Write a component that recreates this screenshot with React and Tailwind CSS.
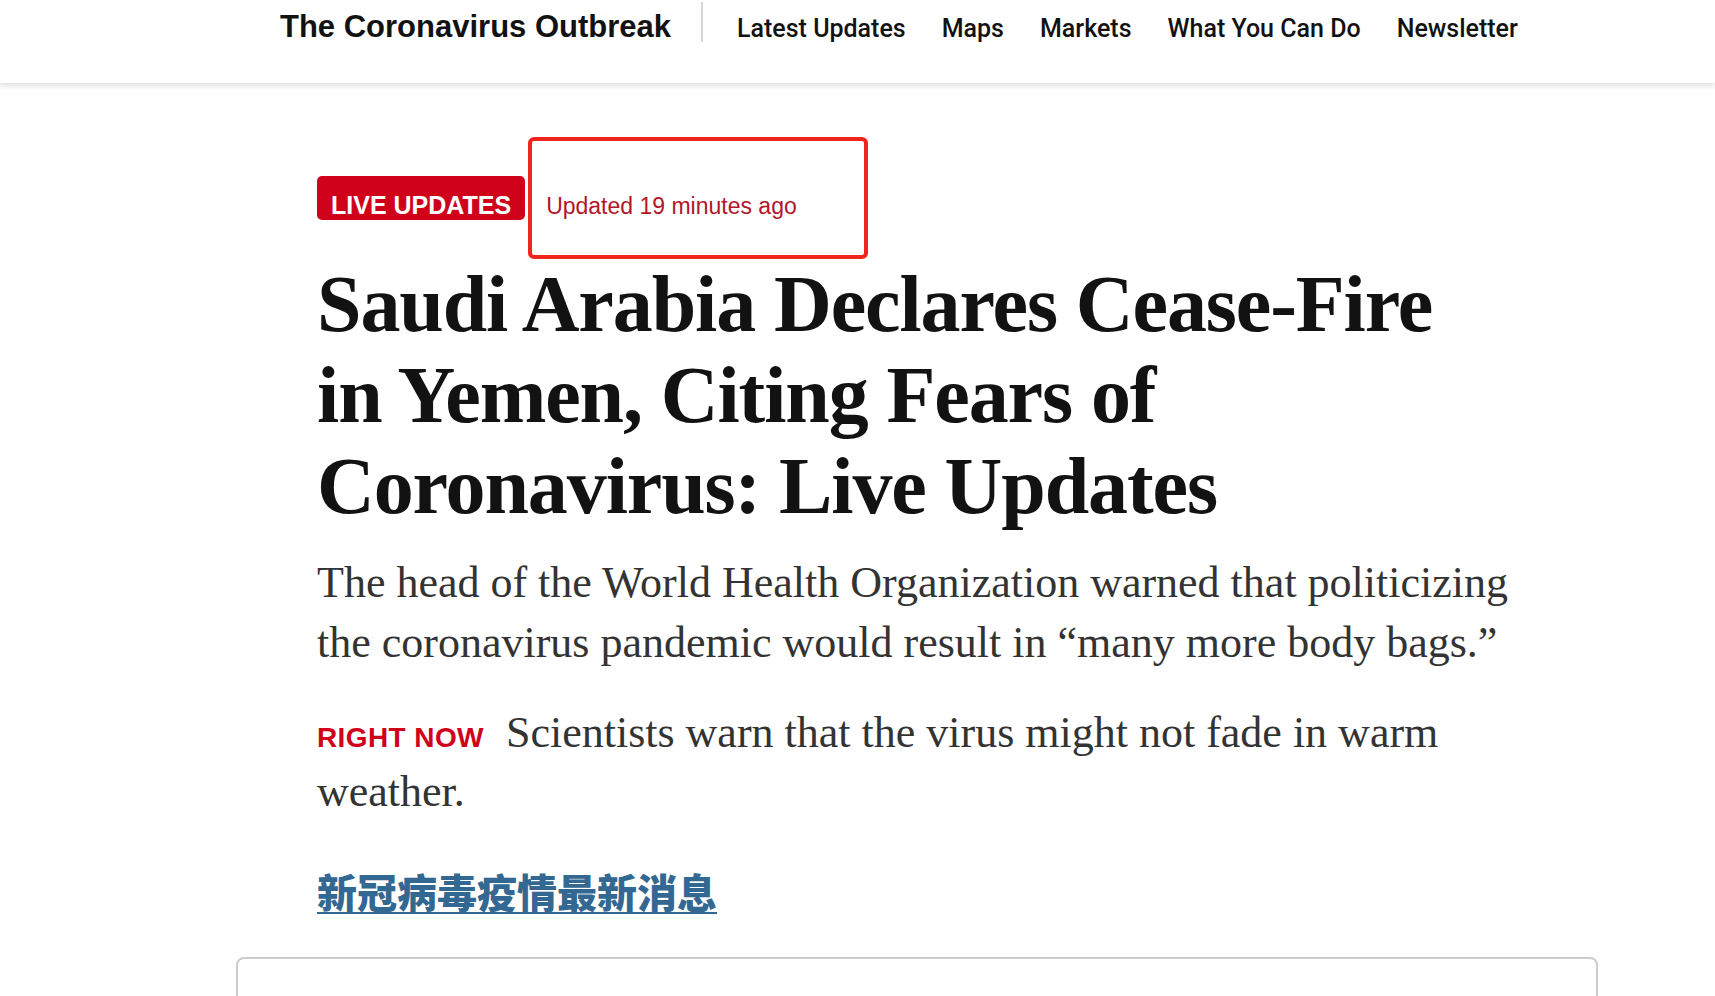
import React from "react";

const navLinks = ["Latest Updates", "Maps", "Markets", "What You Can Do", "Newsletter"];

const App = () => {
    return (
        <div className="relative min-h-[996px] bg-white overflow-hidden">
            {/* Header */}
            <header className="relative z-10 h-[83px] bg-white shadow-[0_3px_5px_rgba(0,0,0,0.12)]">
                <div className="flex items-baseline pl-[280px] pt-[11px]">
                    <span className="font-['Liberation_Sans',Arial,sans-serif] text-[31px] leading-[31px] font-bold text-[#121212] whitespace-nowrap">
                        The Coronavirus Outbreak
                    </span>
                    <span className="self-start -mt-[9px] ml-[30px] mr-[34px] h-[40px] w-[2px] bg-[#d6d6d6]" />
                    <nav className="flex items-baseline gap-[36px]">
                        {navLinks.map((link) => (
                            <a
                                key={link}
                                href="#"
                                className="font-['Roboto',Arial,sans-serif] text-[25px] leading-[25px] font-medium text-[#121212] whitespace-nowrap"
                            >
                                {link}
                            </a>
                        ))}
                    </nav>
                </div>
            </header>

            {/* Story */}
            <main className="pt-[93px]">
                <div className="ml-[317px] w-[1220px]">
                    <div className="flex items-baseline gap-[21px]">
                        <span className="h-[44px] rounded-[5px] bg-[#d0021b] px-[14px] pt-[17px] font-['Liberation_Sans',Arial,sans-serif] text-[25px] leading-[24px] font-bold text-white whitespace-nowrap">
                            LIVE UPDATES
                        </span>
                        <span className="font-['Liberation_Sans',Arial,sans-serif] text-[23px] text-[#b3152b] whitespace-nowrap">
                            Updated 19 minutes ago
                        </span>
                    </div>

                    <h1 className="mt-[35px] font-['Liberation_Serif','Times_New_Roman',serif] text-[80px] leading-[91px] font-bold tracking-[-1.1px] text-[#121212]">
                        Saudi Arabia Declares Cease-Fire
                        <br />
                        in Yemen, Citing Fears of
                        <br />
                        Coronavirus: Live Updates
                    </h1>

                    <p className="mt-[21px] font-['Liberation_Serif','Times_New_Roman',serif] text-[44px] leading-[60px] text-[#333333]">
                        The head of the World Health Organization warned that politicizing the coronavirus pandemic would result in “many more body bags.”
                    </p>

                    <p className="mt-[30px] font-['Liberation_Serif','Times_New_Roman',serif] text-[44px] leading-[59px] text-[#333333]">
                        <span className="mr-[22px] font-['Liberation_Sans',Arial,sans-serif] text-[28px] leading-none font-bold tracking-[0.4px] text-[#d0021b]">RIGHT NOW</span>Scientists warn that the virus might not fade in warm weather.
                    </p>

                    <a
                        href="#"
                        className="mt-[46px] block w-fit font-['Noto_Sans_CJK_SC','Noto_Sans',sans-serif] text-[40px] leading-[48px] font-black text-[#326891] underline decoration-2 underline-offset-[4px]"
                    >
                        新冠病毒疫情最新消息
                    </a>
                </div>

                {/* Card below */}
                <div className="mt-[42px] ml-[236px] h-[120px] w-[1362px] rounded-[8px] border-2 border-[#cccccc] bg-white" />
            </main>

            {/* Annotation box */}
            <div className="absolute left-[528px] top-[137px] h-[122px] w-[340px] rounded-[6px] border-[4px] border-[#f0261c]" />
        </div>
    );
};

export default App;
